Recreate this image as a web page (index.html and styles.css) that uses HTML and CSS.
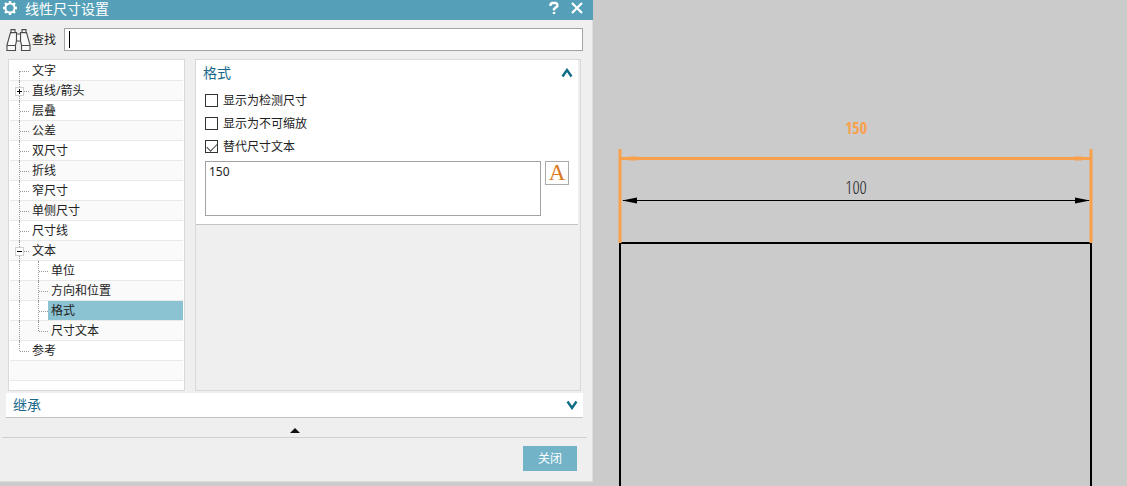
FILE: index.html
```html
<!DOCTYPE html>
<html lang="zh-CN">
<head>
<meta charset="utf-8">
<meta name="viewport" content="width=device-width, initial-scale=1">
<title>线性尺寸设置</title>
<link rel="stylesheet" href="styles.css">
</head>
<body>
<main class="workspace">
  <section class="dialog" aria-label="线性尺寸设置">
    <header class="titlebar">
      <svg class="gear" viewBox="0 0 16 16" width="16" height="16" aria-hidden="true">
        <g stroke="#fff" fill="none">
          <circle cx="8" cy="8" r="4.6" stroke-width="2"/>
          <path d="M8 1v2M8 13v2M1 8h2M13 8h2M3 3l1.5 1.5M11.5 11.5L13 13M3 13l1.5-1.5M11.5 4.5L13 3" stroke-width="2.4"/>
        </g>
      </svg>
      <h1 class="title">线性尺寸设置</h1>
      <button class="title-button" type="button" aria-label="帮助">
        <svg viewBox="0 0 10 14" width="10" height="14"><path d="M1.500 5V3.300L3 2h4l1.300 1.300v2L5 8v1.500M5 11v2" fill="none" stroke="#fff" stroke-width="2.400"/></svg>
      </button>
      <button class="title-button" type="button" aria-label="关闭窗口">
        <svg viewBox="0 0 12 12" width="12" height="12"><path d="M1 1l10 10M11 1L1 11" stroke="#fff" stroke-width="2.2"/></svg>
      </button>
    </header>

    <div class="search">
      <svg class="binoculars" viewBox="0 0 25 22" width="25" height="22" aria-hidden="true">
        <g fill="#fafafa" stroke="#4a4a4a" stroke-width="1.1">
          <path d="M4.5 3.5L1 16v5.5h8.5V16l1-4V3.5zM20.500 3.500L24 16v5.500h-8.500V16l-1-4V3.500z"/>
          <path d="M5 .6h4v3H5zM16 .6h4v3h-4zM10.500 5h4v7h-4zM1 16.500h8.500M15.500 16.500H24" />
        </g>
      </svg>
      <label class="search-label" for="find">查找</label>
      <span class="search-box">
        <input class="search-input" id="find" type="text">
        <span class="caret"></span>
      </span>
    </div>

    <div class="panes">
      <ul class="tree">
        <li class="row first"><button class="node" type="button">文字</button></li>
        <li class="row"><button class="expander plus" type="button" aria-label="展开"></button><button class="node" type="button">直线/箭头</button></li>
        <li class="row"><button class="node" type="button">层叠</button></li>
        <li class="row"><button class="node" type="button">公差</button></li>
        <li class="row"><button class="node" type="button">双尺寸</button></li>
        <li class="row"><button class="node" type="button">折线</button></li>
        <li class="row"><button class="node" type="button">窄尺寸</button></li>
        <li class="row"><button class="node" type="button">单侧尺寸</button></li>
        <li class="row"><button class="node" type="button">尺寸线</button></li>
        <li class="row"><button class="expander" type="button" aria-label="折叠"></button><button class="node" type="button">文本</button></li>
        <li class="row child"><span class="branch"></span><button class="node" type="button">单位</button></li>
        <li class="row child"><span class="branch"></span><button class="node" type="button">方向和位置</button></li>
        <li class="row child"><span class="branch"></span><button class="node selected" type="button">格式</button></li>
        <li class="row child"><span class="branch end"></span><button class="node" type="button">尺寸文本</button></li>
        <li class="row last"><button class="node" type="button">参考</button></li>
        <li class="row empty"></li>
      </ul>

      <div class="detail">
        <section class="format">
          <h2 class="section-head">
            <span>格式</span>
            <svg viewBox="0 0 12 10" width="12" height="10" aria-hidden="true"><path d="M1.500 8.500L6 2l4.500 6.500" fill="none" stroke="#0f6b86" stroke-width="2.400"/></svg>
          </h2>
          <label class="option"><input class="check" type="checkbox"><span>显示为检测尺寸</span></label>
          <label class="option"><input class="check" type="checkbox"><span>显示为不可缩放</span></label>
          <label class="option"><input class="check" type="checkbox" checked><span>替代尺寸文本</span></label>
          <div class="override">
            <textarea class="override-text" aria-label="替代尺寸文本">150</textarea>
            <button class="text-button" type="button" aria-label="编辑文本">A</button>
          </div>
        </section>
      </div>
    </div>

    <button class="inherit" type="button">
      <span>继承</span>
      <svg viewBox="0 0 12 10" width="12" height="10" aria-hidden="true"><path d="M1.500 1.500L6 8l4.500-6.500" fill="none" stroke="#0f6b86" stroke-width="2.400"/></svg>
    </button>

    <div class="collapse">
      <button class="collapse-button" type="button" aria-label="收起">
        <svg viewBox="0 0 10 5" width="10" height="5"><path d="M0 5l5-5 5 5z" fill="#111"/></svg>
      </button>
    </div>

    <footer class="footer">
      <button class="close" type="button">关闭</button>
    </footer>
  </section>

  <section class="canvas" aria-label="图纸">
    <svg class="drawing" viewBox="0 0 534 486">
      <path d="M27 486V243H498V486" fill="none" stroke="#000" stroke-width="2"/>
      <path d="M27 149v94M498 149v94M27 158.500h471" fill="none" stroke="#f9a04c" stroke-width="3"/>
      <path d="M29 158.500l8-2h7v4h-7zM496 158.500l-8-2h-7v4h7z" fill="#f9a04c"/>
      <path d="M30 200.500h466" stroke="#000"/>
      <path d="M29 200.500l15-3v6zM497 200.500l-15-3v6z" fill="#000"/>
      <text class="dimension active" x="263" y="134">150</text>
      <text class="dimension" x="263" y="194">100</text>
    </svg>
  </section>
</main>
</body>
</html>
```
FILE: styles.css
```css
* { box-sizing: border-box; }

body {
  margin: 0;
  background: #cbcbcb;
  color: #222;
  font-family: "Noto Sans", "Noto Sans CJK SC", sans-serif;
  font-size: 12px;
  line-height: 20px;
}

button {
  margin: 0;
  padding: 0;
  border: 0;
  background: none;
  color: inherit;
  font: inherit;
}

.workspace {
  display: flex;
  align-items: flex-start;
  overflow: hidden;
  max-height: 100vh;
}

.dialog {
  flex: 593 1 0;
  min-width: 0;
  background: #efefef;
  border-bottom: 1px solid #ddd;
  box-shadow: inset -1px 0 #dedede;
}

.titlebar {
  display: flex;
  align-items: center;
  height: 20px;
  padding: 0 10px 4px 2px;
  background: #55a0b8;
  color: #fff;
}

.title {
  flex: 1;
  margin: 0 0 0 7px;
  padding-top: 2px;
  font-size: 14px;
  font-weight: 400;
  line-height: 18px;
}

.title-button {
  display: flex;
  margin-left: 12px;
}

.search {
  display: flex;
  align-items: center;
  padding: 8px 10px 8px 6px;
}

.search-label { margin: 0 8px 0 1px; }

.search-box {
  position: relative;
  display: flex;
  flex: 1;
}

.search-input {
  width: 100%;
  height: 23px;
  padding: 0 5px;
  border: 1px solid #a3a3a3;
  background: #fff;
  font: inherit;
}

.caret {
  position: absolute;
  top: 3px;
  left: 5px;
  width: 1px;
  height: 17px;
  background: #000;
}

.panes {
  display: flex;
  gap: 10px;
  padding: 0 12px 0 8px;
}

.tree {
  flex: 0 0 177px;
  margin: 0;
  padding: 1px 1px 9px;
  border: 1px solid #d9d9d9;
  background: #fff;
  list-style: none;
}

.row {
  position: relative;
  display: flex;
  height: 20px;
  padding-left: 19px;
  border-bottom: 1px solid #e9e9e9;
}

.row:nth-child(even) { background: #fafafa; }

.row::before {
  content: "";
  position: absolute;
  top: 0;
  bottom: -1px;
  left: 9px;
  border-left: 1px dotted #999;
}

.row::after {
  content: "";
  position: absolute;
  top: 10px;
  left: 10px;
  width: 9px;
  border-top: 1px dotted #999;
}

.row.first::before { top: 10px; }
.row.last::before { bottom: 9px; }
.row.child::after, .row.empty::before, .row.empty::after { content: none; }
.row.child { padding-left: 38px; }

.branch {
  position: absolute;
  top: 0;
  bottom: -1px;
  left: 28px;
  border-left: 1px dotted #999;
}

.branch.end { bottom: 9px; }

.branch::after {
  content: "";
  position: absolute;
  top: 10px;
  width: 9px;
  border-top: 1px dotted #999;
}

.expander {
  position: absolute;
  z-index: 1;
  top: 6px;
  left: 5px;
  width: 9px;
  height: 9px;
  border: 1px solid #d0d0d0;
  background: linear-gradient(#000, #000) center / 5px 1px no-repeat #fff;
}

.expander.plus {
  background:
    linear-gradient(#000, #000) center / 5px 1px no-repeat,
    linear-gradient(#000, #000) center / 1px 5px no-repeat #fff;
}

.node {
  flex: 1;
  padding-left: 3px;
  line-height: 19px;
  text-align: left;
}

.node.selected { background: #8cc3d3; }

.detail {
  flex: 1;
  min-width: 0;
  border: 1px solid #d9d9d9;
}

.format {
  margin-right: 2px;
  padding: 2px 9px 8px;
  border-bottom: 1px solid #c4c4c4;
  background: #fff;
}

.section-head, .inherit {
  display: flex;
  align-items: center;
  justify-content: space-between;
  color: #17688a;
  font-size: 14px;
  font-weight: 400;
}

.section-head {
  margin: 0 -4px 6px -2px;
  line-height: 21px;
}

.option {
  display: flex;
  align-items: center;
  gap: 5px;
  height: 23px;
}

.check {
  appearance: none;
  width: 13px;
  height: 13px;
  margin: 0;
  border: 1px solid #333;
  background: #fff;
}

.check:checked::after {
  content: "";
  display: block;
  width: 9px;
  height: 5px;
  margin: 2px 0 0 1px;
  border: solid #444;
  border-width: 0 0 1px 1px;
  transform: rotate(-45deg);
}

.override {
  display: flex;
  align-items: flex-start;
  gap: 4px;
  margin-top: 3px;
}

.override-text {
  flex: 1;
  min-width: 0;
  height: 55px;
  padding: 1px 3px;
  border: 1px solid #a3a3a3;
  background: #fff;
  color: #222;
  font: inherit;
  line-height: 18px;
  resize: none;
}

.text-button {
  width: 24px;
  height: 24px;
  border: 1px solid #aaa;
  color: #d97a22;
  font-family: "Liberation Serif", serif;
  font-size: 23px;
  line-height: 22px;
}

.inherit {
  width: calc(100% - 16px);
  height: 25px;
  margin: 2px 10px 0 6px;
  padding: 0 5px 0 7px;
  border-bottom: 1px solid #c2c2c2;
  background: #fff;
}

.collapse {
  display: flex;
  justify-content: center;
  margin: 0 6px 0 2px;
  padding: 10px 0 4px;
  border-bottom: 1px solid #d0d0d0;
}

.collapse-button { display: flex; }

.footer {
  display: flex;
  justify-content: flex-end;
  padding: 8px 16px 10px;
}

.close {
  width: 54px;
  height: 25px;
  background: #73b3c8;
  color: #fff;
}

.canvas {
  flex: 534 1 0;
  min-width: 0;
}

.drawing {
  display: block;
  width: 100%;
}

.dimension {
  fill: #222;
  font-family: "Open Sans Condensed Light", "Roboto Condensed Light", "Roboto Condensed", "Liberation Sans Narrow", "Liberation Sans", sans-serif;
  font-size: 18px;
  font-weight: 300;
  text-anchor: middle;
}

.dimension.active {
  fill: #f9a04c;
  font-family: "Open Sans Condensed", "Roboto Condensed", "Liberation Sans Narrow", "Liberation Sans", sans-serif;
  font-size: 16px;
  font-weight: 700;
}
```
